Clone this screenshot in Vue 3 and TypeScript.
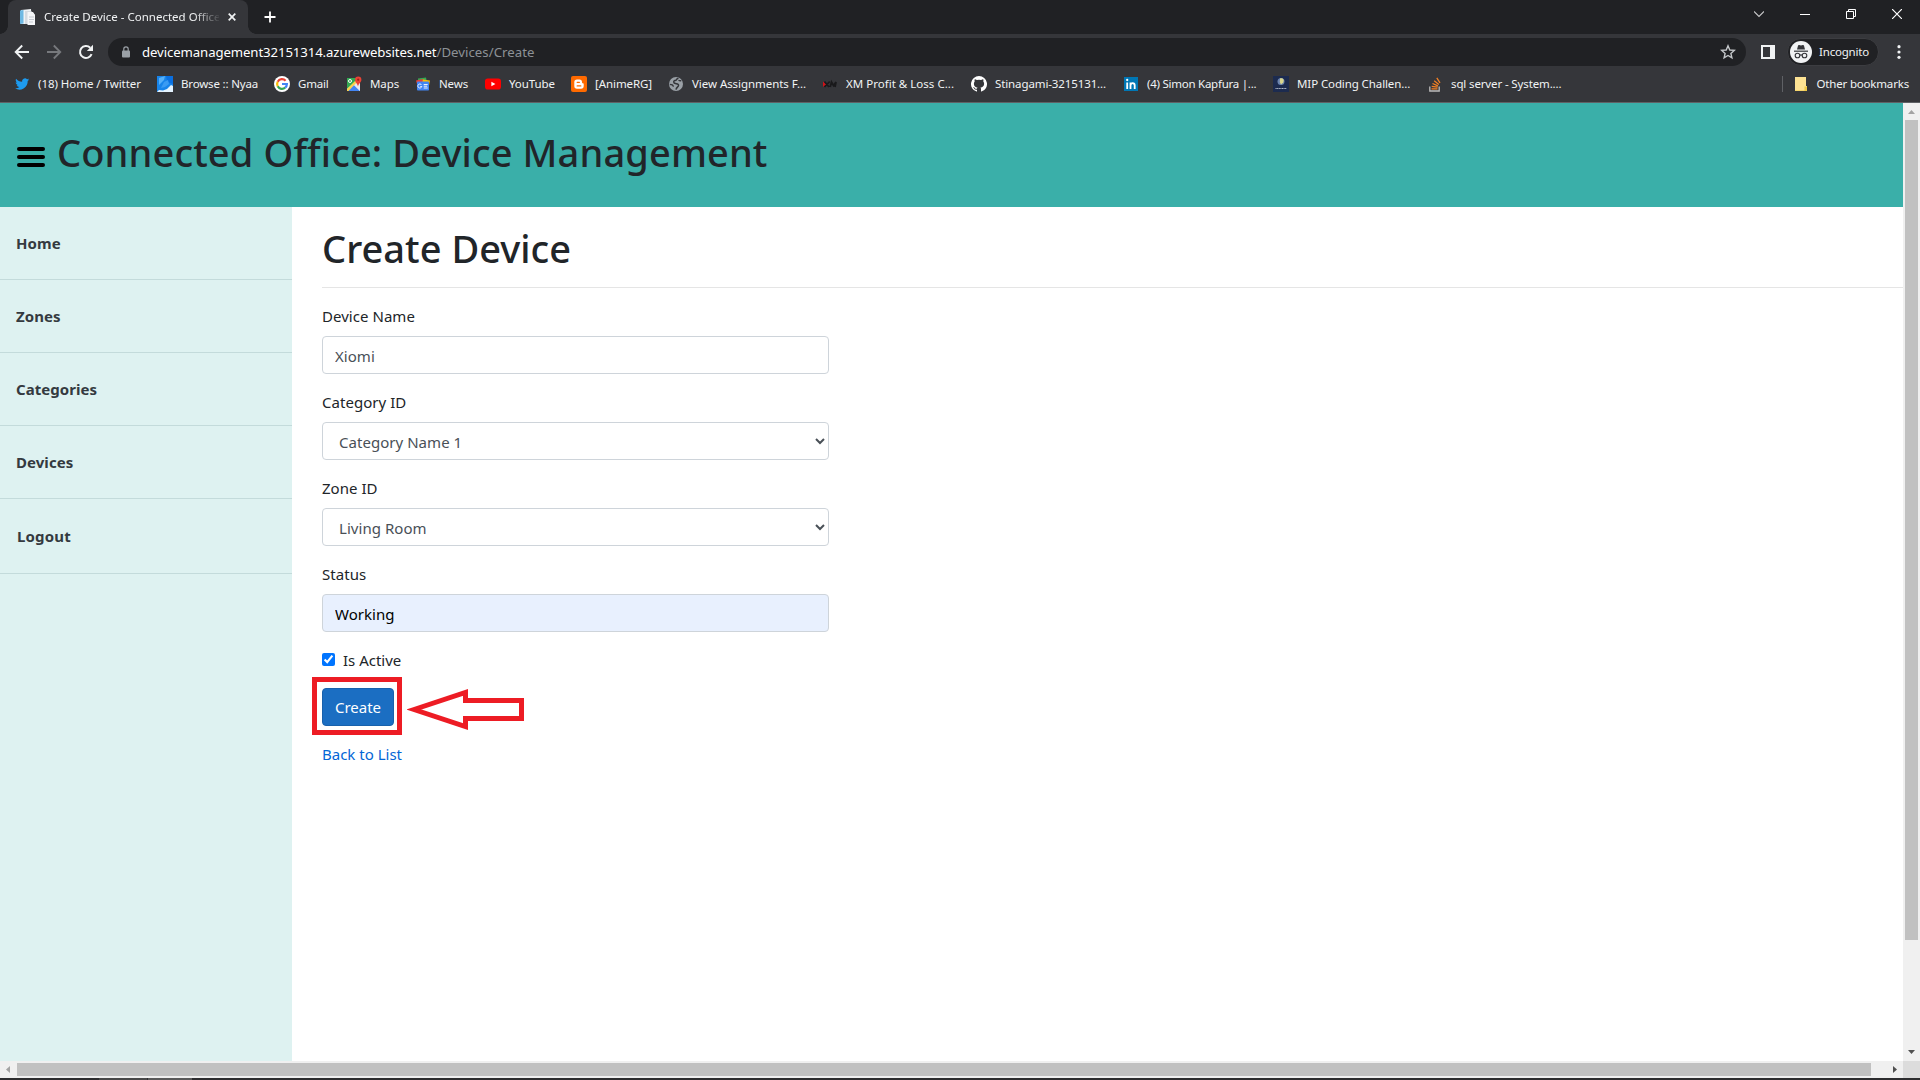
<script setup lang="ts">
import { ref } from 'vue'

interface Bookmark {
  icon: string
  label: string
  width: number
  spacing: number
}

const bookmarks: Bookmark[] = [
  { icon: 'twitter', label: '(18) Home / Twitter', width: 143, spacing: -0.04 },
  { icon: 'nyaa', label: 'Browse :: Nyaa', width: 117, spacing: -0.17 },
  { icon: 'google', label: 'Gmail', width: 72, spacing: -0.18 },
  { icon: 'maps', label: 'Maps', width: 69, spacing: -0.1 },
  { icon: 'news', label: 'News', width: 70, spacing: -0.13 },
  { icon: 'youtube', label: 'YouTube', width: 86, spacing: -0.07 },
  { icon: 'blogger', label: '[AnimeRG]', width: 97, spacing: -0.08 },
  { icon: 'globe', label: 'View Assignments F...', width: 154, spacing: -0.055 },
  { icon: 'xm', label: 'XM Profit & Loss C...', width: 149, spacing: 0.02 },
  { icon: 'github', label: 'Stinagami-3215131...', width: 152, spacing: -0.11 },
  { icon: 'linkedin', label: '(4) Simon Kapfura |...', width: 150, spacing: -0.25 },
  { icon: 'mip', label: 'MIP Coding Challen...', width: 154, spacing: -0.1 },
  { icon: 'stack', label: 'sql server - System....', width: 150, spacing: -0.13 },
]

const menu = ['Home', 'Zones', 'Categories', 'Devices', 'Logout']

const deviceName = ref('Xiomi')
const category = ref('Category Name 1')
const zone = ref('Living Room')
const status = ref('Working')
const isActive = ref(true)
</script>

<template>
  <div class="screen">
    <div class="tabstrip">
      <div class="tab">
        <svg class="favicon" width="16" height="16" viewBox="0 0 16 16">
          <path d="M1 1l10-1 1 15H1z" fill="#eef2f5" />
          <path d="M0 1.500L3.500 1v13.500L0 15z" fill="#6fb9e3" />
          <path d="M5 2h6l4 4v9H5z" fill="#d5dae0" />
          <path d="M7.500 3H13l2 3v10H7.500z" fill="#f5f6f8" />
          <path d="M9 8h5M9 10.500h5M9 13h4" stroke="#c5cad1" />
        </svg>
        <span class="tab-title">Create Device - Connected Office</span>
        <svg class="tab-close" width="8" height="8" viewBox="0 0 8 8">
          <path d="M.7.7l6.600 6.600M7.300.7L.7 7.300" stroke="#f1f3f4" stroke-width="1.700" />
        </svg>
      </div>
      <svg class="new-tab" width="12" height="12" viewBox="0 0 12 12">
        <path d="M6 .5v11M.5 6h11" stroke="#fff" stroke-width="1.800" />
      </svg>
      <div class="window-buttons">
        <svg width="10" height="10" viewBox="0 0 10 10"><path d="M0 2.500l5 5 5-5" fill="none" stroke="#c8c9ca" stroke-width="1.100" /></svg>
        <svg width="10" height="10" viewBox="0 0 10 10"><path d="M0 5.500h10" stroke="#fff" /></svg>
        <svg width="10" height="10" viewBox="0 0 10 10"><path d="M.5 2.500h7v7h-7zM2.500 2.500v-2h7v7h-2" fill="none" stroke="#fff" /></svg>
        <svg width="10" height="10" viewBox="0 0 10 10"><path d="M0 0l10 10M10 0L0 10" stroke="#fff" stroke-width="1.200" /></svg>
      </div>
    </div>

    <div class="toolbar">
      <svg class="nav-icon" width="16" height="16" viewBox="0 0 16 16">
        <path d="M15 8H2M8.200 1.500L1.700 8l6.500 6.500" fill="none" stroke="#f1f3f4" stroke-width="1.900" />
      </svg>
      <svg class="nav-icon" width="16" height="16" viewBox="0 0 16 16">
        <path d="M1 8h13M7.800 1.500L14.300 8l-6.500 6.500" fill="none" stroke="#77797d" stroke-width="1.800" />
      </svg>
      <svg class="nav-icon" width="16" height="16" viewBox="0 0 16 16">
        <path d="M13.600 10.200A6 6 0 1 1 12.200 3.700" fill="none" stroke="#f1f3f4" stroke-width="2" />
        <path d="M15 .8V7H8.800z" fill="#f1f3f4" />
      </svg>
      <div class="omnibox">
        <svg width="10" height="12" viewBox="0 0 10 12">
          <rect x="1" y="4.500" width="8" height="7" rx="1" fill="#9aa0a6" />
          <path d="M2.800 5V3a2.200 2.200 0 0 1 4.400 0v2" fill="none" stroke="#9aa0a6" stroke-width="1.200" />
        </svg>
        <span class="url"><span class="host">devicemanagement32151314.azurewebsites.net</span><span class="path">/Devices/Create</span></span>
        <svg class="star" width="16" height="16" viewBox="0 0 16 16">
          <path d="M8 1.800l1.800 4.200 4.500.4-3.400 3 1 4.400L8 11.500l-3.900 2.300 1-4.400-3.400-3 4.500-.4z" fill="none" stroke="#c4c7ca" stroke-width="1.400" />
        </svg>
      </div>
      <svg class="side-panel" width="14" height="14" viewBox="0 0 14 14">
        <path d="M0 0h14v14H0zM2 2v10h7V2z" fill="#f1f3f4" fill-rule="evenodd" />
      </svg>
      <div class="profile">
        <svg width="22" height="22" viewBox="0 0 22 22">
          <circle cx="11" cy="11" r="11" fill="#f1f3f4" />
          <path d="M7 8.500l1-3.800q.3-1 1.200-.7l1.800.5 1.800-.5q.9-.3 1.200.7l1 3.800z" fill="#35363a" />
          <path d="M4 10.200h14" stroke="#35363a" stroke-width="1.200" />
          <g fill="none" stroke="#35363a" stroke-width="1.100">
            <circle cx="7.500" cy="14.500" r="2.300" /><circle cx="14.500" cy="14.500" r="2.300" />
            <path d="M9.800 14.300q1.200-.8 2.400 0" />
          </g>
        </svg>
        <span>Incognito</span>
      </div>
      <svg class="kebab" width="4" height="14" viewBox="0 0 4 14" fill="#f1f3f4">
        <circle cx="2" cy="1.700" r="1.600" /><circle cx="2" cy="7" r="1.600" /><circle cx="2" cy="12.300" r="1.600" />
      </svg>
    </div>

    <div class="bookmarks">
      <div v-for="b in bookmarks" :key="b.icon" class="bookmark" :style="{ width: b.width + 'px' }">
        <svg width="16" height="16" viewBox="0 0 16 16">
          <path v-if="b.icon === 'twitter'" d="M15.200 3.600c-.5.200-1 .4-1.600.4.600-.3 1-.8 1.200-1.500-.5.300-1.100.5-1.800.7a2.900 2.900 0 0 0-4.900 2.600C5.700 5.700 3.600 4.600 2.100 2.800c-.8 1.300-.3 3 .9 3.800-.5 0-.9-.1-1.300-.3 0 1.400 1 2.500 2.300 2.800-.4.100-.8.100-1.300 0 .4 1.100 1.400 1.900 2.700 2A5.800 5.800 0 0 1 1.100 12.300a8.200 8.200 0 0 0 12.600-7.200c.6-.4 1.100-.9 1.500-1.500z" fill="#1d9bf0" />
          <g v-else-if="b.icon === 'nyaa'">
            <path d="M0 0h16v16H0z" fill="#1784ea" />
            <path d="M9 0h7v8l-3-1-3-2z" fill="#0a6fe0" />
            <path d="M2 2l6-2-1 4-5 5z" fill="#56b0f8" />
            <path d="M7 6l4-2 1 4-4 3-4 1z" fill="#3a9bf3" />
            <path d="M0 16l2-2 4 .5 4-1.500 4-4 2 1v6z" fill="#e4f3ff" />
          </g>
          <g v-else-if="b.icon === 'google'">
            <circle cx="8" cy="8" r="8" fill="#fff" />
            <g fill="none" stroke-width="2.200">
              <path d="M11.600 4.700A4.900 4.900 0 0 0 3.700 5.700" stroke="#ea4335" />
              <path d="M3.700 5.700a4.900 4.900 0 0 0 0 4.600" stroke="#fbbc05" />
              <path d="M3.700 10.300a4.900 4.900 0 0 0 7.500 1.400" stroke="#34a853" />
              <path d="M11.200 11.700A4.900 4.900 0 0 0 12.900 8H8" stroke="#4285f4" />
            </g>
          </g>
          <g v-else-if="b.icon === 'maps'">
            <path d="M1 2h13v13H1z" fill="#e8eaed" />
            <path d="M1 2h9v3L1 13z" fill="#34a853" />
            <path d="M1 13l8-8 1.500 1.500L3 15H1z" fill="#fbd34b" />
            <path d="M8 9.200l5.800 5.800H2.500z" fill="#4285f4" />
            <circle cx="4" cy="5" r="1.500" fill="none" stroke="#fff" />
            <path d="M12 10.500C11.500 7.500 9 6.600 9 3.800a3.200 3.200 0 0 1 6.400 0c0 2.800-2.900 3.700-3.400 6.700z" fill="#ea4335" />
            <circle cx="12.200" cy="3.700" r="1.100" fill="#9b2418" />
          </g>
          <g v-else-if="b.icon === 'news'">
            <path d="M3 2.500l8-1 1 5H3z" fill="#34a853" />
            <path d="M1 4.500l7-1.500 3 4-9 1z" fill="#ea4335" />
            <path d="M8 3.500l7 1-1 5-7-2z" fill="#fbbc05" />
            <rect x="2" y="5.500" width="12" height="9" rx=".8" fill="#4285f4" />
            <path d="M6.600 9a2 2 0 1 0 .2 1.500H5.300M8.700 8.500h4M8.700 10.200h3.500M8.700 12h4" fill="none" stroke="#fff" stroke-width=".9" />
          </g>
          <g v-else-if="b.icon === 'youtube'">
            <rect y="2.500" width="16" height="11" rx="2.800" fill="#f00" />
            <path d="M6.400 5.700v4.600l4-2.300z" fill="#fff" />
          </g>
          <g v-else-if="b.icon === 'blogger'">
            <rect width="16" height="16" rx="2" fill="#ff6a00" />
            <path d="M6 3.500h2.500A2.500 2.500 0 0 1 11 6c0 1 .2 1.200.9 1.200.6 0 .8.300.8.800v2a2.700 2.700 0 0 1-2.700 2.700H6A2.700 2.700 0 0 1 3.300 10V6.200A2.700 2.700 0 0 1 6 3.500z" fill="#fff" />
            <path d="M6.200 6.300h2.200M6.200 9.900h3.600" stroke="#ff6a00" stroke-width="1.300" stroke-linecap="round" />
          </g>
          <g v-else-if="b.icon === 'globe'">
            <circle cx="8" cy="8" r="7" fill="#9aa0a6" />
            <path d="M10.500 2.200C8 2.600 9 4.300 7 4.600S5.500 7.200 7.500 7.600s3.500.4 3 2-2 1.600-2.500 4" fill="none" stroke="#35363a" stroke-width="1.500" />
            <path d="M1.800 8.300c2 0 3.500.8 3.500 2.400M10.500 4.300c1 .6 1.800.5 2.800.4" fill="none" stroke="#35363a" stroke-width="1.300" />
          </g>
          <g v-else-if="b.icon === 'xm'">
            <path d="M1 5.500l3.500 2.700L1 11z" fill="#d01219" />
            <path d="M2.500 5.500l4.500 5.500M7.700 5.500L2.500 11M8.200 11L9.500 6l2 3.500L14 6l-1 5" fill="none" stroke="#19191b" stroke-width="1.800" />
          </g>
          <path v-else-if="b.icon === 'github'" d="M8 0a8 8 0 0 0-2.500 15.600c.4.100.5-.2.500-.4v-1.500c-2.200.5-2.700-.9-2.700-.9-.4-.9-.9-1.200-.9-1.200-.7-.5.100-.5.100-.5.800.1 1.200.8 1.200.8.700 1.200 1.900.9 2.300.7.100-.5.300-.9.500-1.100-1.800-.2-3.600-.9-3.600-4 0-.9.300-1.600.8-2.100-.1-.2-.4-1 .1-2.100 0 0 .7-.2 2.200.8a7.700 7.700 0 0 1 4 0c1.500-1 2.200-.8 2.200-.8.400 1.100.2 1.900.1 2.100.5.600.8 1.300.8 2.100 0 3.100-1.900 3.800-3.700 4 .3.300.6.800.6 1.500v2.200c0 .2.100.5.500.4A8 8 0 0 0 8 0z" fill="#fff" />
          <g v-else-if="b.icon === 'linkedin'">
            <rect x="1" y="1" width="14" height="14" fill="#0077b5" />
            <path d="M4.200 6.500V13M7.500 13V6.500M7.500 9.500c0-3.200 4.200-3.200 4.200 0V13" fill="none" stroke="#fff" stroke-width="1.800" />
            <circle cx="4.200" cy="4" r="1.150" fill="#fff" />
          </g>
          <g v-else-if="b.icon === 'mip'">
            <rect width="16" height="16" fill="#1c2b4f" />
            <circle cx="8" cy="5.500" r="3.500" fill="#6b83ae" />
            <path d="M7 2.500c3-.8 4.500 1.500 3.200 4L8 8.500 6.800 6z" fill="#d9d68c" />
            <path d="M2.500 12.500h11" stroke="#aeb6c6" stroke-dasharray="1.200 .4" />
          </g>
          <g v-else fill="none">
            <path d="M2.800 10.500v4.500h9.400v-4.500" stroke="#bcbbbb" stroke-width="1.300" />
            <path d="M4.500 12.800h6M4.700 10.300l5.900.9M5.500 7.500l5.400 2.300M7.200 4.700l4.600 3.800M9.800 1.800l3.200 5" stroke="#f48024" stroke-width="1.300" />
          </g>
        </svg>
        <span :style="{ letterSpacing: b.spacing + 'px' }">{{ b.label }}</span>
      </div>
      <div class="other">
        <svg width="12" height="14" viewBox="0 0 12 14">
          <path d="M0 0h11v9h1v5H0z" fill="#fde293" />
          <path d="M0 13.400h9.500V9.500H12V14H0z" fill="#efc846" />
        </svg>
        <span>Other bookmarks</span>
      </div>
    </div>

    <div class="viewport">
      <div class="page">
        <header class="header">
          <div class="burger"><i></i><i></i><i></i></div>
          <h1>Connected Office: Device Management</h1>
        </header>
        <div class="body">
          <nav class="sidebar">
            <a v-for="m in menu" :key="m" :class="{ logout: m === 'Logout' }">{{ m }}</a>
          </nav>
          <main class="main">
            <h1>Create Device</h1>
            <hr />
            <form class="form">
              <div class="group">
                <label>Device Name</label>
                <input v-model="deviceName" class="control" type="text" />
              </div>
              <div class="group">
                <label>Category ID</label>
                <select v-model="category" class="control"><option>Category Name 1</option></select>
              </div>
              <div class="group">
                <label>Zone ID</label>
                <select v-model="zone" class="control"><option>Living Room</option></select>
              </div>
              <div class="group">
                <label>Status</label>
                <input v-model="status" class="control filled" type="text" />
              </div>
              <label class="check"><input v-model="isActive" type="checkbox" />Is Active</label>
              <div class="submit">
                <button type="button">Create</button>
                <div class="highlight"></div>
                <svg class="arrow" width="120" height="46" viewBox="0 0 120 46">
                  <path d="M7 22.500L58.500 5.500V13.500H114.500V31.500H58.500V39.500z" fill="none" stroke="#ed1c24" stroke-width="5" />
                </svg>
              </div>
              <a class="back">Back to List</a>
            </form>
          </main>
        </div>
      </div>
      <div class="vbar">
        <svg width="17" height="17" viewBox="0 0 17 17"><path d="M5 11l3.500-4 3.500 4z" fill="#a3a3a3" /></svg>
        <div class="vthumb"></div>
        <svg width="17" height="17" viewBox="0 0 17 17"><path d="M5 6l3.500 4L12 6z" fill="#505050" /></svg>
      </div>
    </div>
    <div class="hbar">
      <svg width="17" height="17" viewBox="0 0 17 17"><path d="M10 5L6 8.500l4 3.500z" fill="#a3a3a3" /></svg>
      <div class="hthumb"></div>
      <svg width="17" height="17" viewBox="0 0 17 17"><path d="M7 5l4 3.500L7 12z" fill="#505050" /></svg>
      <div class="corner"></div>
    </div>
    <div class="taskbar"><i></i><b></b></div>
  </div>
</template>

<style>
body { margin: 0; overflow: hidden; }
</style>

<style scoped>
* { box-sizing: border-box; }
svg { display: block; flex: none; }
.screen {
  width: 1920px; height: 1080px; display: flex; flex-direction: column; overflow: hidden;
  font-family: "Noto Sans", "Open Sans", sans-serif; background: #35363a; color: #f1f3f4;
}

.tabstrip { height: 34px; flex: none; display: flex; background: #202124; padding-left: 8px; }
.tab {
  position: relative; width: 240px; height: 34px; background: #35363a; border-radius: 8px 8px 0 0;
  display: flex; align-items: center; padding-left: 12px;
}
.tab::before, .tab::after {
  content: ""; position: absolute; bottom: 0; width: 8px; height: 8px;
}
.tab::before { left: -8px; background: radial-gradient(circle at 0 0, #202124 7.500px, #35363a 8px); }
.tab::after { right: -8px; background: radial-gradient(circle at 100% 0, #202124 7.500px, #35363a 8px); }
.tab-title {
  width: 176px; margin-left: 7px; padding-left: 1px; font-size: 11.500px; line-height: 18px; white-space: nowrap; overflow: hidden;
  -webkit-mask-image: linear-gradient(90deg, #000 150px, transparent 178px);
  mask-image: linear-gradient(90deg, #000 150px, transparent 178px);
}
.tab-close { margin-left: 9px; }
.new-tab { margin: 11px 0 0 16px; }
.window-buttons { margin-left: auto; display: flex; gap: 36px; padding: 9px 18px 0 0; }

.toolbar { height: 36px; flex: none; display: flex; align-items: center; padding-left: 14px; }
.nav-icon { margin-right: 16px; }
.omnibox {
  width: 1638px; height: 28px; border-radius: 14px; background: #202124; margin-left: -2px;
  display: flex; align-items: center; padding: 0 10px 0 13px;
}
.url { font-size: 13.200px; line-height: 20px; margin-left: 11px; white-space: nowrap; }
.host { color: #fff; letter-spacing: -0.100px; }
.path { color: #8d9196; letter-spacing: 0.040px; }
.star { margin-left: auto; }
.side-panel { margin-left: 15px; }
.profile {
  width: 92px; height: 28px; border-radius: 14px; margin-left: 12px; padding-left: 2px;
  background: #202124; border: 1px solid #3c3d41; display: flex; align-items: center; gap: 7px;
  font-size: 11.500px; letter-spacing: -0.190px;
}
.profile span { line-height: 16px; padding-bottom: 1px; }
.kebab { margin-left: 18px; }

.bookmarks {
  height: 33px; flex: none; display: flex; padding: 6px 0 10px 14px; border-bottom: 1px solid #5f6165;
  font-size: 11.500px; line-height: 16px; white-space: nowrap;
}
.bookmark { display: flex; gap: 8px; height: 16px; flex: none; }
.other {
  margin-left: auto; border-left: 1px solid #5f6165; padding-left: 12px; margin-right: 11px; height: 16px;
  display: flex; align-items: center; gap: 10px; letter-spacing: -0.180px;
}

.viewport { flex: 1; min-height: 0; display: flex; background: #fff; color: #212529; }
.page { width: 1903px; display: flex; flex-direction: column; }
.header { height: 104px; flex: none; background: #3aafa9; display: flex; padding-left: 17px; }
.burger { display: flex; flex-direction: column; gap: 4px; margin-top: 44px; width: 28px; }
.burger i { height: 4px; border-radius: 2px; background: #000; }
h1 { margin: 0; font-size: 38px; font-weight: 500; line-height: 48px; color: #212529; white-space: nowrap; }
.header h1 { margin: 25px 0 0 12px; letter-spacing: 0.120px; }
.body { flex: 1; display: flex; min-height: 0; }
.sidebar { width: 292px; flex: none; background: #def2f1; display: flex; flex-direction: column; }
.sidebar a {
  height: 73px; flex: none; padding: 24px 16px 0; font-size: 15px; font-weight: 700; line-height: 24px;
  color: #343a40; border-bottom: 1px solid #c3dbdb; letter-spacing: 0.050px;
}
.sidebar .logout { height: 75px; padding: 25px 17px 0; letter-spacing: 0.180px; }
.main { flex: 1; padding: 17px 0 0 30px; font-size: 15px; line-height: 24px; }
.main h1 { letter-spacing: 0.020px; }
hr { margin: 15px 0 16px; border: 0; border-top: 1px solid #e5e5e5; }
.form { width: 507px; display: flex; flex-direction: column; align-items: flex-start; letter-spacing: 0.040px; }
.group { width: 507px; margin-bottom: 16px; display: flex; flex-direction: column; gap: 8px; }
.control {
  width: 507px; height: 38px; border: 1px solid #ced4da; border-radius: 4px; padding: 7px 12px 5px; margin: 0;
  font: 15px/24px "Noto Sans", "Open Sans", sans-serif; letter-spacing: 0.040px; color: #495057; background: #fff;
}
.filled { background: #e8f0fe; color: #000; }
.check { height: 24px; margin-bottom: 16px; display: flex; align-items: center; gap: 8px; letter-spacing: 0; }
.check input { width: 13px; height: 13px; margin: 0 0 2px; accent-color: #0075ff; }
.submit { position: relative; height: 38px; margin-bottom: 16px; }
.submit button {
  display: block; width: 72px; height: 38px; border: 1px solid #1861ac; border-radius: 4px; background: #1b6ec2;
  color: #fff; font: 15px/24px "Noto Sans", "Open Sans", sans-serif; padding: 0;
}
.highlight { position: absolute; left: -10px; top: -11px; width: 90px; height: 58px; border: 5px solid #ed1c24; }
.arrow { position: absolute; left: 85px; top: -1px; }
.back { color: #0366d6; letter-spacing: 0; }

.vbar { width: 17px; background: #f0f0f0; display: flex; flex-direction: column; align-items: center; }
.vthumb { width: 13px; height: 820px; background: #c1c1c1; margin-bottom: auto; }
.hbar { height: 17px; flex: none; display: flex; align-items: center; background: #f0f0f0; }
.hthumb { width: 1854px; height: 13px; background: #c1c1c1; margin-right: auto; }
.corner { width: 17px; height: 17px; background: #dcdcdc; }
.taskbar { height: 2px; flex: none; background: #2d2d2f; display: flex; padding-left: 99px; }
.taskbar i { width: 48px; background: #484848; }
.taskbar b { width: 44px; margin-left: 1px; background: #5a5a5a; }
</style>
